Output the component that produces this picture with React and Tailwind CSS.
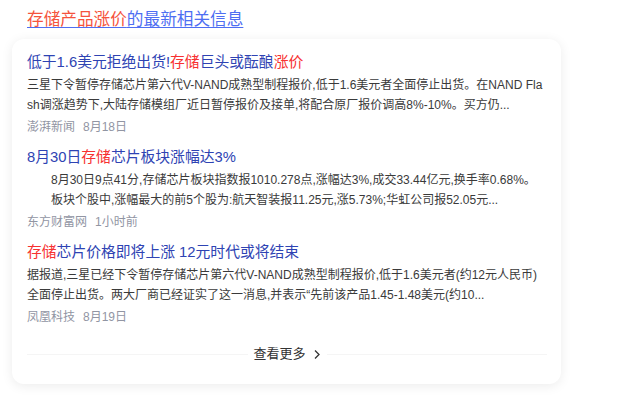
import React from "react";

const items = [
  {
    title: [
      { t: "低于1.6美元拒绝出货!" },
      { t: "存储", em: true },
      { t: "巨头或酝酿" },
      { t: "涨价", em: true },
    ],
    lines: [
      "三星下令暂停存储芯片第六代V-NAND成熟型制程报价,低于1.6美元者全面停止出货。在NAND Fla",
      "sh调涨趋势下,大陆存储模组厂近日暂停报价及接单,将配合原厂报价调高8%-10%。买方仍...",
    ],
    source: "澎湃新闻",
    time: "8月18日",
  },
  {
    title: [
      { t: "8月30日" },
      { t: "存储", em: true },
      { t: "芯片板块涨幅达3%" },
    ],
    lines: [
      "8月30日9点41分,存储芯片板块指数报1010.278点,涨幅达3%,成交33.44亿元,换手率0.68%。",
      "板块个股中,涨幅最大的前5个股为:航天智装报11.25元,涨5.73%;华虹公司报52.05元...",
    ],
    indent: true,
    source: "东方财富网",
    time: "1小时前",
  },
  {
    title: [
      { t: "存储", em: true },
      { t: "芯片价格即将上涨 12元时代或将结束" },
    ],
    lines: [
      "据报道,三星已经下令暂停存储芯片第六代V-NAND成熟型制程报价,低于1.6美元者(约12元人民币)",
      "全面停止出货。两大厂商已经证实了这一消息,并表示“先前该产品1.45-1.48美元(约10...",
    ],
    source: "凤凰科技",
    time: "8月19日",
  },
];

const font = "font-['Liberation_Sans','Noto_Sans_CJK_SC',sans-serif]";

const NewsItem = ({ item }) => (
  <div>
    <div className="text-[14.8px] leading-[22px] text-[#2e43b3] whitespace-nowrap">
      {item.title.map((p, i) => (
        <span key={i} className={p.em ? "text-[#f73131]" : ""}>
          {p.t}
        </span>
      ))}
    </div>
    <div className={`mt-[2px] text-[12px] leading-[20px] text-[#3a3a3a] ${item.indent ? "pl-[24px]" : ""}`}>
      {item.lines.map((l, i) => (
        <div key={i} className="whitespace-nowrap overflow-hidden">
          {l}
        </div>
      ))}
    </div>
    <div className="mt-[2px] flex gap-[8px] text-[12px] leading-[20px] text-[#9195a3]">
      <span>{item.source}</span>
      <span>{item.time}</span>
    </div>
  </div>
);

export default function App() {
  return (
    <div className={`w-[640px] h-[398px] bg-white overflow-hidden ${font}`}>
      <div className="pt-[7px] pl-[27px]">
        <a className="text-[16.65px] leading-[26px] underline text-[#4e6ef2] decoration-1 underline-offset-2">
          <span className="text-[#f5533d]">存储产品涨价</span>的最新相关信息
        </a>
      </div>

      <div className="mt-[6px] ml-[12px] w-[549px] rounded-[12px] bg-white shadow-[0_2px_12px_0_rgba(0,0,0,0.08)] pt-[12px] pl-[15px] pr-[14px] pb-[20px]">
        <div className="flex flex-col gap-[9px]">
          {items.map((item, i) => (
            <NewsItem key={i} item={item} />
          ))}
        </div>

        {/* 查看更多 */}
        <div className="mt-[17px] flex items-center h-[20px]">
          <div className="flex-1 h-px bg-[#f5f5f5]" />
          <div className="flex items-center mx-[6px] text-[13px] text-[#333]">
            <span>查看更多</span>
            <svg width="8" height="11" viewBox="0 0 8 11" className="ml-[7px]">
              <polyline points="2,1.5 6,5.5 2,9.5" fill="none" stroke="#333" strokeWidth="1.3" />
            </svg>
          </div>
          <div className="flex-1 h-px bg-[#f5f5f5]" />
        </div>
      </div>
    </div>
  );
}
